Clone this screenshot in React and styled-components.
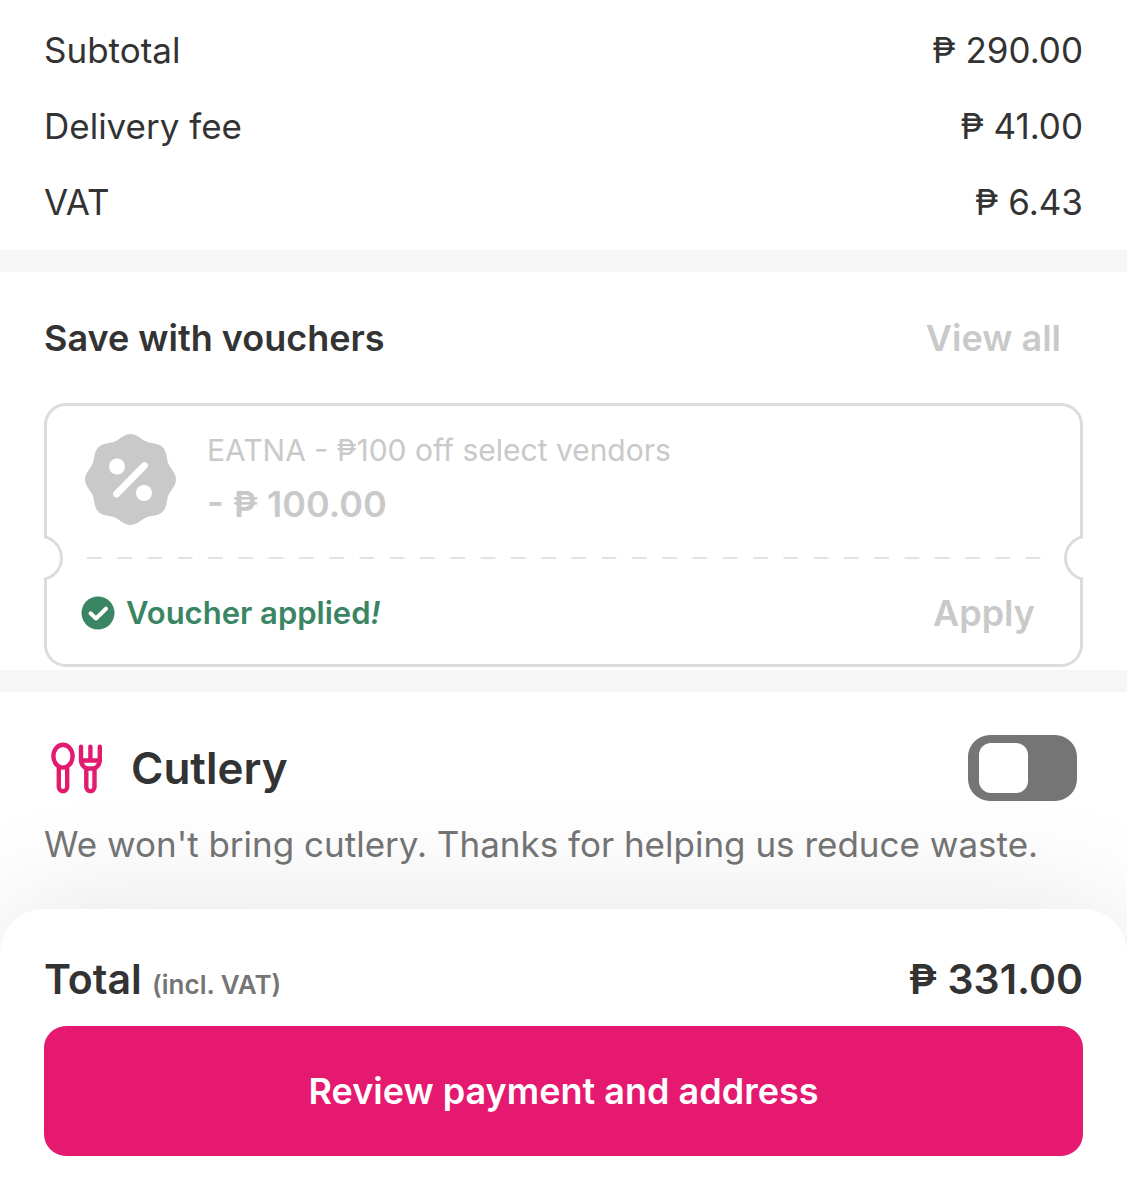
import React, { useState } from 'react'
import styled, { createGlobalStyle } from 'styled-components'

const charges = [
    { label: 'Subtotal', amount: '₱ 290.00' },
    { label: 'Delivery fee', amount: '₱ 41.00' },
    { label: 'VAT', amount: '₱ 6.43' },
]

// scalloped edge of the voucher badge, eight lobes round the centre
const badgePoints = Array.from({ length: 144 }, (_, i) => {
    const angle = (i / 144) * Math.PI * 2
    const r = 43.3 + 2.2 * Math.cos(angle * 8)
    return `${(r * Math.cos(angle)).toFixed(2)},${(r * Math.sin(angle)).toFixed(2)}`
}).join(' ')

const BadgeIcon = () => (
    <svg width="91" height="91" viewBox="-45.5 -45.5 91 91" aria-hidden="true">
        <polygon points={badgePoints} fill="#c9c9c9" />
        <circle cx="-13.5" cy="-13" r="8" fill="#fff" />
        <circle cx="13.5" cy="13.5" r="8" fill="#fff" />
        <path d="M14 -14L-14 14.5" stroke="#fff" strokeWidth="6.8" strokeLinecap="round" />
    </svg>
)

const CheckIcon = () => (
    <svg width="34" height="34" viewBox="-17 -17 34 34" aria-hidden="true">
        <circle r="16.5" fill="#398564" />
        <path d="M-7.5 0.3L-2 5.5L8 -4.3" fill="none" stroke="#fff" strokeWidth="4" strokeLinecap="round" strokeLinejoin="round" />
    </svg>
)

const CutleryIcon = () => (
    <svg width="54" height="52" viewBox="0 0 54 52" fill="none" stroke="#e21b70" strokeWidth="4.4" strokeLinecap="round" strokeLinejoin="round" aria-hidden="true">
        <ellipse cx="13" cy="14.2" rx="9.6" ry="11.4" />
        <path d="M8.8 26.5v18.5a4.2 4.2 0 0 0 8.4 0V26.5" />
        <path d="M31 4.8v12.7c0 5 2.4 7.4 5.3 9v18.5a4.1 4.1 0 0 0 8.2 0V26.5c2.9-1.6 5.3-4 5.3-9V4.8" />
        <path d="M40.4 4.8v13.7M31.5 18.5h18M36.5 26.5h8" />
    </svg>
)

const App = () => {
    const [cutlery, setCutlery] = useState(false)

    return (
        <Page>
            <GlobalStyle />
            <Summary>
                {charges.map(({ label, amount }) => (
                    <Charge key={label}>
                        <dt>{label}</dt>
                        <dd>{amount}</dd>
                    </Charge>
                ))}
            </Summary>

            <Vouchers>
                <SectionHeader>
                    <SectionTitle>Save with vouchers</SectionTitle>
                    <MutedButton type="button">View all</MutedButton>
                </SectionHeader>
                <Ticket>
                    <TicketInfo>
                        <BadgeIcon />
                        <div>
                            <VoucherName>EATNA - ₱100 off select vendors</VoucherName>
                            <VoucherValue>- ₱ 100.00</VoucherValue>
                        </div>
                    </TicketInfo>
                    <Perforation>
                        <Dashes />
                    </Perforation>
                    <TicketFooter>
                        <Applied>
                            <CheckIcon />
                            <span>Voucher applied<em>!</em></span>
                        </Applied>
                        <MutedButton type="button">Apply</MutedButton>
                    </TicketFooter>
                </Ticket>
            </Vouchers>

            <Cutlery>
                <CutleryHeader>
                    <CutleryIcon />
                    <CutleryLabel htmlFor="cutlery">Cutlery</CutleryLabel>
                    <Toggle
                        id="cutlery"
                        type="checkbox"
                        checked={cutlery}
                        onChange={(e) => setCutlery(e.target.checked)}
                    />
                </CutleryHeader>
                <Note>We won't bring cutlery. Thanks for helping us reduce waste.</Note>
            </Cutlery>

            <Sheet>
                <TotalRow>
                    <span>Total <small>(incl. VAT)</small></span>
                    <span>₱ 331.00</span>
                </TotalRow>
                <ReviewButton type="button">Review payment and address</ReviewButton>
            </Sheet>
        </Page>
    )
}

const GlobalStyle = createGlobalStyle`
    *, *::before, *::after {
        box-sizing: border-box;
    }
    body {
        margin: 0;
        background: #fff;
        color: #333;
        font-family: Inter, "Liberation Sans", sans-serif;
        font-size: 35px;
        line-height: 44px;
    }
    h2, p, dl, dd {
        margin: 0;
    }
    button {
        border: 0;
        font: inherit;
        cursor: pointer;
    }
    svg {
        display: block;
        flex: none;
    }
`

const Page = styled.main`
    display: flex;
    flex-direction: column;
    min-height: 100vh;
`

const Summary = styled.dl`
    padding: 12px 44px 10px;
`

const Charge = styled.div`
    display: flex;
    justify-content: space-between;
    padding: 16px 0;
`

const Vouchers = styled.section`
    padding: 44px 44px 3px;
    border: solid #f6f6f6;
    border-width: 22px 0;
`

const SectionHeader = styled.header`
    display: flex;
    justify-content: space-between;
    align-items: center;
    padding-right: 22px;
    margin-bottom: 43px;
`

const SectionTitle = styled.h2`
    font-size: 36px;
    font-weight: 600;
`

const MutedButton = styled.button`
    padding: 0;
    background: none;
    color: #c9c9c9;
    && {
        font-size: 36px;
        font-weight: 600;
    }
`

const Ticket = styled.div`
    border: 3px solid #dcdcdc;
    border-radius: 22px;
    clip-path: inset(0);
`

const TicketInfo = styled.div`
    display: flex;
    gap: 31px;
    padding: 22px 38px 0;
    height: 129px;
    color: #c9c9c9;
    svg {
        margin-top: 6px;
    }
`

const VoucherName = styled.p`
    font-size: 30px;
`

const VoucherValue = styled.p`
    margin-top: 10px;
    font-size: 36px;
    font-weight: 600;
`

const Perforation = styled.div`
    position: relative;
    display: flex;
    align-items: center;
    height: 46px;
    padding: 0 24px 0 40px;
    &::before,
    &::after {
        content: '';
        position: absolute;
        top: 0;
        width: 46px;
        height: 46px;
        border: 3px solid #dcdcdc;
        border-radius: 50%;
        background: #fff;
    }
    &::before {
        left: -30px;
    }
    &::after {
        right: -30px;
    }
`

const Dashes = styled.div`
    flex: 1;
    height: 2px;
    background: linear-gradient(to right, #e2e2e2 50%, transparent 50%);
    background-size: 30px 2px;
    background-repeat: round;
`

const TicketFooter = styled.div`
    display: flex;
    justify-content: space-between;
    align-items: center;
    padding: 10px 45px 29px 34px;
`

const Applied = styled.div`
    display: flex;
    align-items: center;
    gap: 11px;
    color: #398564;
    font-size: 31px;
    font-weight: 600;
`

const Cutlery = styled.section`
    flex: 1;
    padding: 43px 44px;
`

const CutleryHeader = styled.div`
    display: flex;
    align-items: center;
    padding: 0 6px;
`

const CutleryLabel = styled.label`
    margin-left: 27px;
    font-size: 44px;
    font-weight: 600;
`

const Toggle = styled.input`
    appearance: none;
    width: 109px;
    height: 66px;
    margin: 0 0 0 auto;
    padding: 8px 11px;
    border-radius: 22px;
    background: ${(props) => (props.checked ? '#e21b70' : '#757575')};
    cursor: pointer;
    &::before {
        content: '';
        display: block;
        width: 49px;
        height: 50px;
        margin-left: ${(props) => (props.checked ? 'auto' : '0')};
        border-radius: 12px;
        background: #fff;
    }
`

const Note = styled.p`
    margin-top: 21px;
    color: #757575;
`

const Sheet = styled.footer`
    position: sticky;
    bottom: 0;
    padding: 46px 44px 44px;
    border-radius: 44px 44px 0 0;
    background: #fff;
    box-shadow: 0 0 130px -6px rgba(0, 0, 0, 0.12);
`

const TotalRow = styled.div`
    display: flex;
    justify-content: space-between;
    align-items: baseline;
    margin-bottom: 22px;
    font-size: 41px;
    line-height: 49px;
    font-weight: 600;
    small {
        color: #757575;
        font-size: 26px;
        line-height: 1;
    }
`

const ReviewButton = styled.button`
    width: 100%;
    padding: 43px 20px;
    border-radius: 22px;
    background: #e5196f;
    color: #fff;
    && {
        font-size: 36px;
        font-weight: 600;
    }
`

export default App
